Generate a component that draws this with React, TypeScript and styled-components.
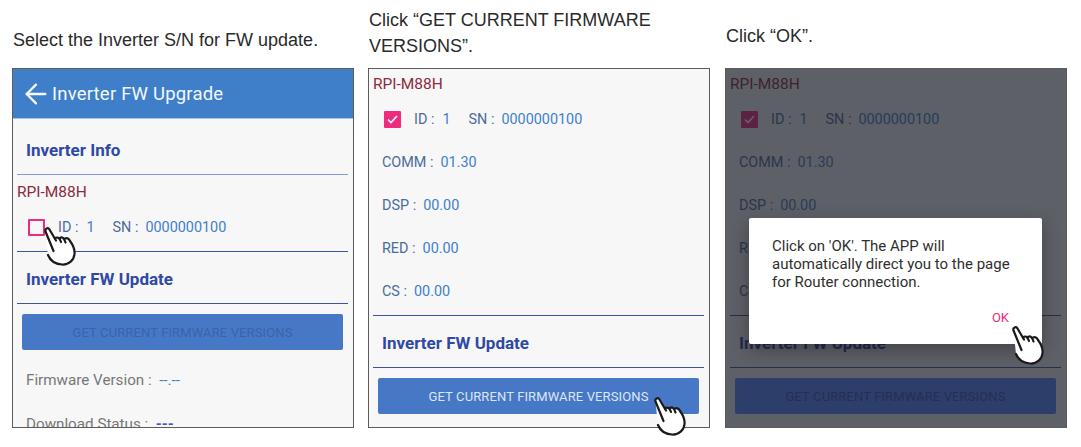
import styled, { createGlobalStyle } from 'styled-components';
import { ArrowLeft } from 'lucide-react';

const GlobalStyle = createGlobalStyle`
    html, body {
        margin: 0;
        padding: 0;
        background: #ffffff;
    }
`

const Page = styled.div`
    display: grid;
    grid-template-columns: 356px 357px 342px;
    width: 1081px;
    height: 447px;
    padding-left: 12px;
    box-sizing: border-box;
    overflow: hidden;
`

const Step = styled.div`
    display: flex;
    flex-direction: column;
`

const Caption = styled.div<{ $top: number }>`
    box-sizing: border-box;
    height: 68px;
    padding: ${p => p.$top}px 0 0 1px;
    font-family: "Liberation Sans", Arial, sans-serif;
    font-size: 18px;
    line-height: 26px;
    color: #2a2a2a;
`

const Panel = styled.div`
    position: relative;
    width: 342px;
    height: 360px;
`

const Screen = styled.div`
    position: relative;
    box-sizing: border-box;
    width: 100%;
    height: 100%;
    border: 1px solid #5c5c5c;
    background: #f7f7f7;
    overflow: hidden;
    font-family: Roboto, "Liberation Sans", sans-serif;
`

const AppBar = styled.div`
    display: flex;
    align-items: center;
    box-sizing: border-box;
    height: 50px;
    padding-left: 7px;
    background: #3f7fca;
    border-bottom: 1px solid #a9c5e6;
    color: #f4f8fc;
    font-size: 18.5px;
    letter-spacing: 0.2px;
`

const SectionTitle = styled.div<{ $tall?: boolean }>`
    display: flex;
    align-items: center;
    box-sizing: border-box;
    height: ${p => (p.$tall ? 55 : 51)}px;
    padding: ${p => (p.$tall ? 6 : 2)}px 0 0 13px;
    color: #2f49a5;
    font-size: 17px;
    font-weight: 700;
`

const Divider = styled.div<{ $light?: boolean }>`
    height: 1px;
    margin: 0 5px 0 4px;
    background: ${p => (p.$light ? '#7f9bd8' : '#3a55a5')};
`

const DeviceName = styled.div<{ $height: number }>`
    display: flex;
    align-items: center;
    height: ${p => p.$height}px;
    padding-left: 4px;
    color: #8e2b3c;
    font-size: 15.5px;
`

const SelectRow = styled.div<{ $height: number; $after: number }>`
    display: flex;
    align-items: center;
    height: ${p => p.$height}px;
    margin-bottom: ${p => p.$after}px;
    padding-left: 15px;
    font-size: 14.4px;
`

const CheckBox = styled.div<{ $checked?: boolean }>`
    display: flex;
    align-items: center;
    justify-content: center;
    box-sizing: border-box;
    width: 17px;
    height: 17px;
    margin-right: 13px;
    border: 2px solid #ee2b7f;
    border-radius: 1px;
    background: ${p => (p.$checked ? '#ee2b7f' : 'transparent')};
`

const Label = styled.span<{ $gap?: number }>`
    margin-right: ${p => p.$gap ?? 7}px;
    color: #4c6c9c;
`

const Value = styled.span<{ $gap?: number; $strong?: boolean }>`
    margin-right: ${p => p.$gap ?? 0}px;
    color: ${p => (p.$strong ? '#3a55c5' : '#3f7fca')};
    font-weight: ${p => (p.$strong ? 700 : 400)};
`

const InfoRow = styled.div`
    display: flex;
    align-items: center;
    height: 43px;
    padding-left: 13px;
    font-size: 14.4px;
`

const FirmwareList = styled.div`
    margin: 2px 0 2px;
`

type ButtonTone = 'active' | 'disabled' | 'dimmed'

const buttonBackground: Record<ButtonTone, string> = {
    active: '#4778c6',
    disabled: '#4778c6',
    dimmed: '#5187ff', // sits under the scrim, comes out as the dark navy of the reference
}

const buttonText: Record<ButtonTone, string> = {
    active: '#dbe6f5',
    disabled: '#3a63ad',
    dimmed: '#3a53bb',
}

const ActionButton = styled.div<{ $tone: ButtonTone }>`
    display: flex;
    align-items: center;
    justify-content: center;
    height: 36px;
    margin: 10px 10px 0 9px;
    border-radius: 2px;
    background: ${p => buttonBackground[p.$tone]};
    color: ${p => buttonText[p.$tone]};
    font-size: 13px;
    letter-spacing: 0.12px;
`

const StatusRow = styled.div`
    display: flex;
    align-items: center;
    flex-shrink: 0;
    height: 44px;
    padding-left: 13px;
    color: #777777;
    font-size: 15.2px;
`

const StatusList = styled.div`
    margin-top: 8px;
`

const Scrim = styled.div`
    position: absolute;
    inset: 0;
    background: rgba(28, 32, 42, 0.7);
`

const Dialog = styled.div`
    position: absolute;
    left: 23px;
    top: 149px;
    display: flex;
    flex-direction: column;
    box-sizing: border-box;
    width: 293px;
    height: 126px;
    padding: 19px 10px 0 23px;
    border-radius: 2px;
    background: #ffffff;
    box-shadow: 0 6px 18px rgba(0, 0, 0, 0.3);
`

const DialogText = styled.div`
    color: #2f2f2f;
    font-size: 15px;
    line-height: 18px;
`

const DialogAction = styled.div`
    margin: 19px 23px 0 0;
    text-align: right;
    color: #ee2b7f;
    font-size: 13px;
`

const HandWrap = styled.div<{ $x: number; $y: number }>`
    position: absolute;
    left: ${p => p.$x}px;
    top: ${p => p.$y}px;
    width: 32px;
    height: 40px;
    line-height: 0;
`

const Hand = ({ x, y }: { x: number; y: number }) => (
    <HandWrap $x={x} $y={y}>
        <svg width="32" height="40" viewBox="0 0 32 40" fill="none" stroke="#1a1a1a" strokeWidth="2.200" strokeLinecap="round" strokeLinejoin="round">
            <path
                fill="#ffffff"
                stroke="none"
                d="M1.500 4.500C0.500 1.500 4 0 5.500 2.500L12 12L21 11.500L26 14C29 18 31 23 30.500 27C30 33 25 38 18 37.500C11 37 6 33 4 28Z"
            />
            <path d="M9.500 24L1.500 4.500C0.500 1.500 4 0 5.500 2.500L12 13.500" />
            <path d="M11 11.500C13 9.500 15.500 10.500 17 15" />
            <path d="M16 11C18 9.500 20 10.500 21.500 15.500" />
            <path d="M21 11.500C23 10.500 25 11.500 26 14C29 18 31 23 30.500 27C30 33 25 38 18 37.500C11 37 6 33 4 28" />
        </svg>
    </HandWrap>
)

const CheckMark = () => (
    <svg width="11" height="9" viewBox="0 0 11 9" fill="none" stroke="#ffffff" strokeWidth="1.600">
        <path d="M1 4.500L4 7.500L10 1" />
    </svg>
)

const InverterRow = ({ checked, height, after }: { checked?: boolean; height: number; after: number }) => (
    <SelectRow $height={height} $after={after}>
        <CheckBox $checked={checked}>{checked && <CheckMark />}</CheckBox>
        <Label $gap={8}>ID :</Label>
        <Value $gap={18}>1</Value>
        <Label $gap={7}>SN :</Label>
        <Value>0000000100</Value>
    </SelectRow>
)

const versions = [
    { name: 'COMM', value: '01.30' },
    { name: 'DSP', value: '00.00' },
    { name: 'RED', value: '00.00' },
    { name: 'CS', value: '00.00' },
]

const FirmwareDetails = ({ tone }: { tone: ButtonTone }) => (
    <>
        <DeviceName $height={30}>RPI-M88H</DeviceName>
        <InverterRow checked height={40} after={0} />
        <FirmwareList>
            {versions.map(v => (
                <InfoRow key={v.name}>
                    <Label>{v.name} :</Label>
                    <Value>{v.value}</Value>
                </InfoRow>
            ))}
        </FirmwareList>
        <Divider />
        <SectionTitle>Inverter FW Update</SectionTitle>
        <Divider />
        <ActionButton $tone={tone}>GET CURRENT FIRMWARE VERSIONS</ActionButton>
    </>
)

const App = () => {
    return (
        <Page>
            <GlobalStyle />
            <Step>
                <Caption $top={27}>Select the Inverter S/N for FW update.</Caption>
                <Panel>
                    <Screen>
                        <AppBar>
                            <ArrowLeft size={32} strokeWidth={1.75} />
                            Inverter FW Upgrade
                        </AppBar>
                        <SectionTitle $tall>Inverter Info</SectionTitle>
                        <Divider $light />
                        <DeviceName $height={34}>RPI-M88H</DeviceName>
                        <InverterRow height={36} after={6} />
                        <Divider />
                        <SectionTitle>Inverter FW Update</SectionTitle>
                        <Divider />
                        <ActionButton $tone="disabled">GET CURRENT FIRMWARE VERSIONS</ActionButton>
                        <StatusList>
                            <StatusRow>Firmware Version :&nbsp;&nbsp;<Value>--.--</Value></StatusRow>
                            <StatusRow>Download Status :&nbsp;&nbsp;<Value $strong>---</Value></StatusRow>
                        </StatusList>
                    </Screen>
                    <Hand x={32} y={159} />
                </Panel>
            </Step>
            <Step>
                <Caption $top={7}>Click “GET CURRENT FIRMWARE<br />VERSIONS”.</Caption>
                <Panel>
                    <Screen>
                        <FirmwareDetails tone="active" />
                    </Screen>
                    <Hand x={286} y={329} />
                </Panel>
            </Step>
            <Step>
                <Caption $top={23}>Click “OK”.</Caption>
                <Panel>
                    <Screen>
                        <FirmwareDetails tone="dimmed" />
                        <Scrim />
                        <Dialog>
                            <DialogText>
                                Click on 'OK'. The APP will automatically direct you to the page for Router connection.
                            </DialogText>
                            <DialogAction>OK</DialogAction>
                        </Dialog>
                    </Screen>
                    <Hand x={287} y={258} />
                </Panel>
            </Step>
        </Page>
    )
}

export default App
